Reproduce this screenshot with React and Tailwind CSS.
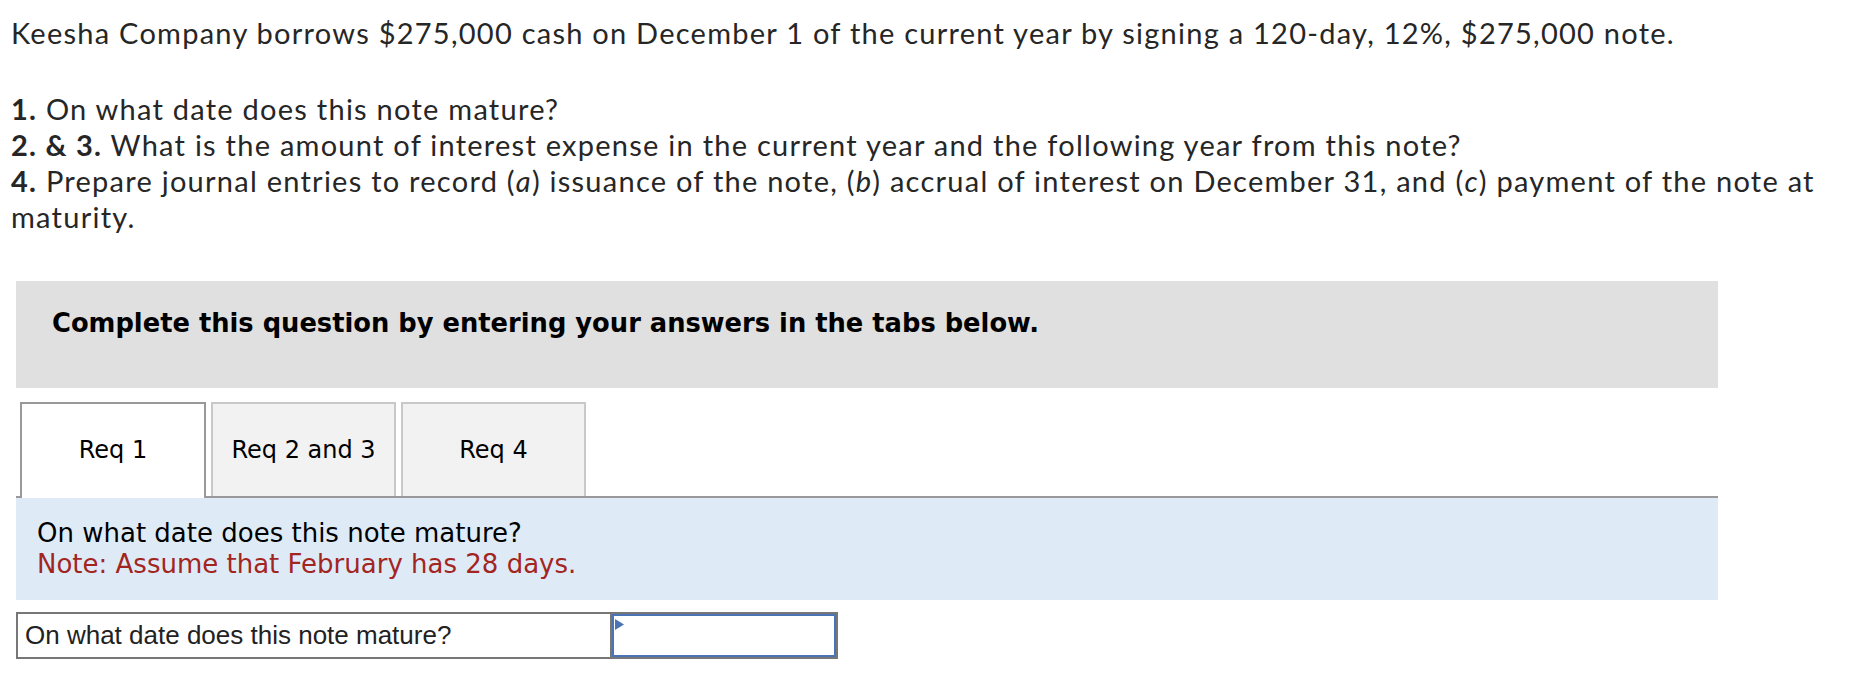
export default function App() {
  const tabs = ["Req 1", "Req 2 and 3", "Req 4"];
  return (
    <div className="w-[1876px] h-[674px] bg-white overflow-hidden">
      <div
        className="pl-[11px] pt-[15px] w-[1860px] text-[29px] leading-[36px] tracking-[1.25px] text-[#262626]"
        style={{ fontFamily: "Lato, 'Open Sans', sans-serif" }}
      >
        <p>
          Keesha Company borrows $275,000 cash on December 1 of the current year by signing a 120-day, 12%, $275,000 note.
        </p>
        <p className="mt-[40px]">
          <b className="font-bold">1.</b> On what date does this note mature?
        </p>
        <p>
          <b className="font-bold">2. &amp; 3.</b> What is the amount of interest expense in the current year and the following year from this note?
        </p>
        <p>
          <b className="font-bold">4.</b> Prepare journal entries to record (<i>a</i>) issuance of the note, (<i>b</i>) accrual of interest on December 31, and (<i>c</i>) payment of the note at maturity.
        </p>
      </div>

      <div className="ml-[16px] w-[1702px] mt-[46px]" style={{ fontFamily: "'DejaVu Sans', Verdana, sans-serif" }}>
        <div className="h-[107px] bg-[#e0e0e0] pl-[36px] pt-[27px]">
          <p className="text-[25.75px] leading-[30px] font-bold text-black">
            Complete this question by entering your answers in the tabs below.
          </p>
        </div>

        <div className="mt-[14px] flex items-end gap-[5px] pl-[4px] border-b-2 border-[#999]">
          {tabs.map((t, i) =>
            i === 0 ? (
              <div
                key={t}
                className="-mb-[2px] w-[186px] h-[96px] bg-white border-2 border-b-0 border-[#999] flex items-center justify-center pb-[2px] text-[24px] text-black"
              >
                {t}
              </div>
            ) : (
              <div
                key={t}
                className="w-[185px] h-[94px] bg-[#f2f2f2] border-2 border-b-0 border-[#c8c8c8] flex items-center justify-center text-[24px] text-black"
              >
                {t}
              </div>
            )
          )}
        </div>

        <div className="h-[102px] bg-[#deebf7] pl-[21px] pt-[20px] text-[26px] leading-[31px]">
          <p className="text-black">On what date does this note mature?</p>
          <p className="text-[#a3251f]">Note: Assume that February has 28 days.</p>
        </div>

        <div className="mt-[12px] flex w-[822px] h-[47px] border-2 border-[#777]">
          <div
            className="w-[594px] border-r-2 border-[#777] pl-[7px] flex items-center text-[26px] text-[#222]"
            style={{ fontFamily: "'Liberation Sans', Arial, sans-serif" }}
          >
            On what date does this note mature?
          </div>
          <div className="relative flex-1 border-2 border-[#4a74b5] bg-white">
            <svg className="absolute left-[1px] top-[3px]" width="9" height="11" viewBox="0 0 9 11">
              <polygon points="0,0 9,5.5 0,11" fill="#4a74b5" />
            </svg>
          </div>
        </div>
      </div>
    </div>
  );
}
